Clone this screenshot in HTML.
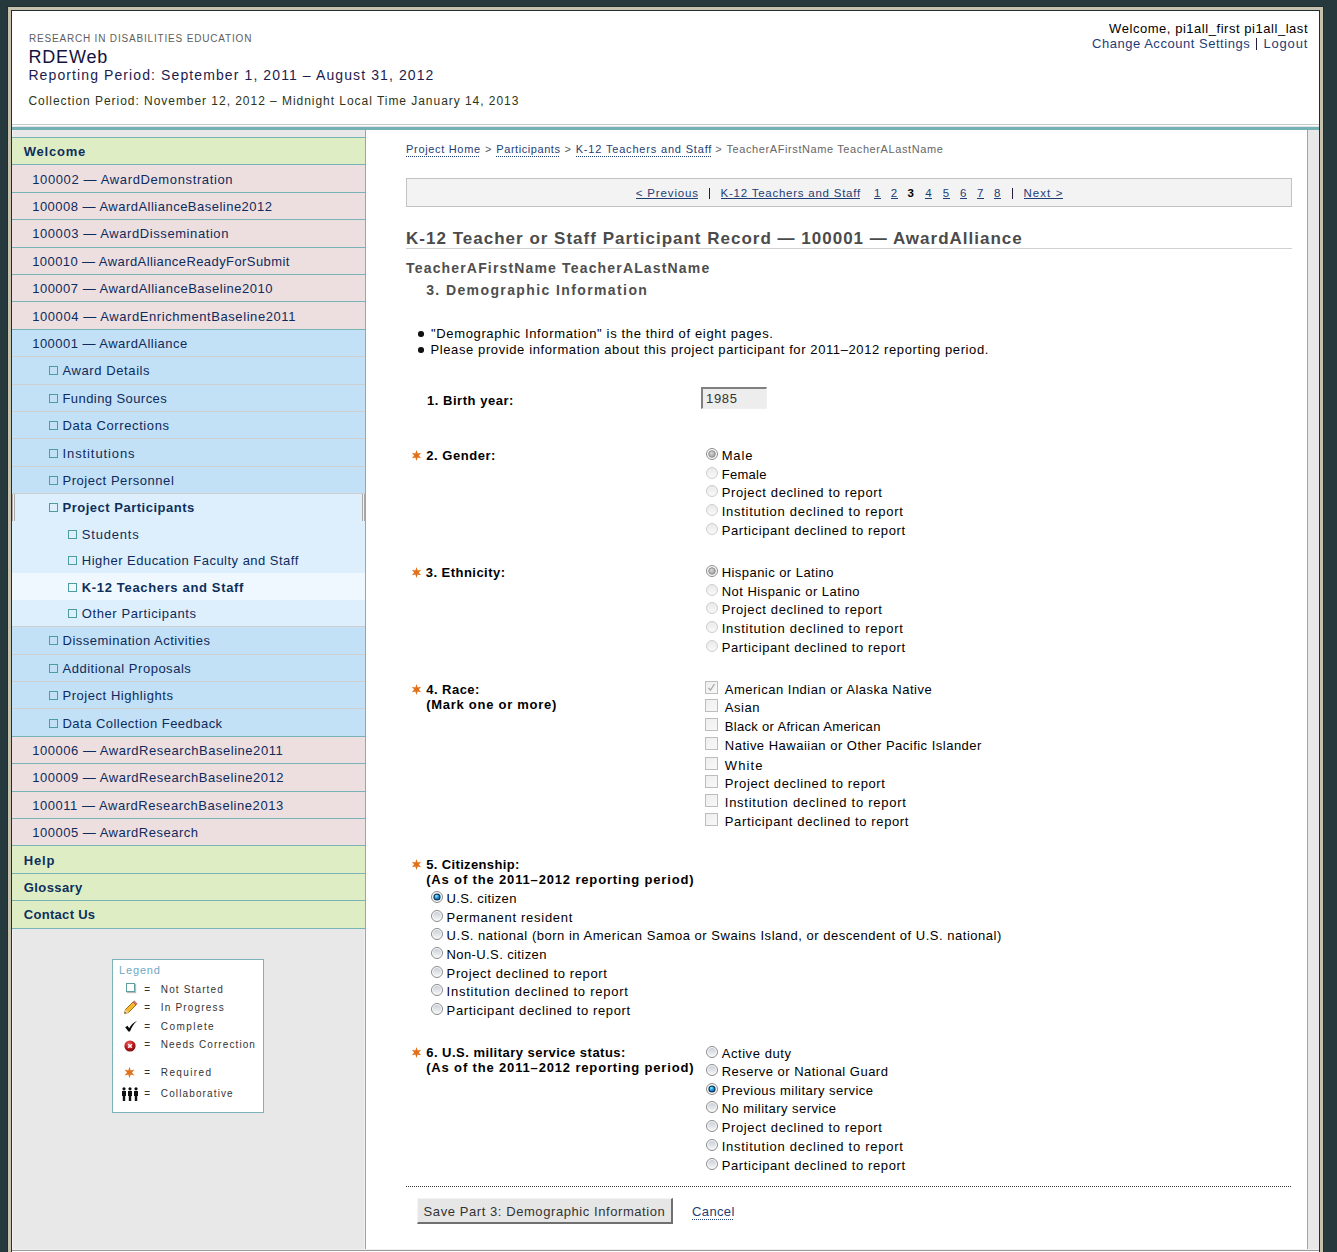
<!DOCTYPE html>
<html><head><meta charset="utf-8"><title>RDEWeb</title>
<style>
html,body{margin:0;padding:0}
body{width:1337px;height:1252px;overflow:hidden;position:relative;background:#263a3e;font-family:"Liberation Sans", sans-serif}
.t{line-height:20px;white-space:pre}
</style></head><body>
<svg width="0" height="0" style="position:absolute"><defs><linearGradient id="gdis" x1="0" y1="0" x2="0" y2="1"><stop offset="0" stop-color="#e9e9e9"/><stop offset="1" stop-color="#f9f9f9"/></linearGradient><radialGradient id="gdchk" cx="0.4" cy="0.35" r="0.7"><stop offset="0" stop-color="#d8d8d8"/><stop offset="1" stop-color="#9c9c9c"/></radialGradient><linearGradient id="gen" x1="0" y1="0" x2="0" y2="1"><stop offset="0" stop-color="#c9d0d8"/><stop offset="1" stop-color="#f4f5f6"/></linearGradient><radialGradient id="gchk" cx="0.35" cy="0.3" r="0.8"><stop offset="0" stop-color="#9ef0ff"/><stop offset="0.5" stop-color="#22a0e0"/><stop offset="1" stop-color="#0d5fa0"/></radialGradient></defs></svg>
<div style="position:absolute;left:7px;top:6px;width:1317px;height:1300px;background:#1e3034"></div>
<div style="position:absolute;left:8px;top:7px;width:1315px;height:1300px;background:#c6c2ad"></div>
<div style="position:absolute;left:11px;top:10px;width:1309px;height:1300px;background:#1e3034"></div>
<div style="position:absolute;left:12px;top:11px;width:1307px;height:1300px;background:#fff"></div>
<div style="position:absolute;left:12px;top:124px;width:1307px;height:1px;background:#c8c8c8"></div>
<div style="position:absolute;left:12px;top:126px;width:1307px;height:1px;background:#e4e4e4"></div>
<div style="position:absolute;left:12px;top:127px;width:1307px;height:3px;background:#75b0b2"></div>
<div style="position:absolute;left:12px;top:130px;width:353px;height:1120px;background:#e8e8e8"></div>
<div style="position:absolute;left:12px;top:130px;width:1px;height:1120px;background:#f3f3f3"></div>
<div style="position:absolute;left:365px;top:130px;width:1px;height:1120px;background:#78b3b6"></div>
<div style="position:absolute;left:364px;top:930px;width:1px;height:320px;background:#efefef"></div>
<div style="position:absolute;left:1307px;top:130px;width:1px;height:1120px;background:#78b3b6"></div>
<div style="position:absolute;left:1308px;top:130px;width:11px;height:1120px;background:#e8e8e8"></div>
<div style="position:absolute;left:12px;top:1249px;width:1307px;height:1px;background:#f0f0f0"></div>
<div style="position:absolute;left:12px;top:1250px;width:1307px;height:1px;background:#9a9a9a"></div>
<div style="position:absolute;left:12px;top:1251px;width:1307px;height:2px;background:#fff"></div>
<div style="position:absolute;left:1256px;top:38px;width:1px;height:12px;background:#2a1a40"></div>
<div style="position:absolute;left:12px;top:137px;width:353px;height:1px;background:#78b3b6"></div>
<div style="position:absolute;left:12px;top:138px;width:353px;height:26px;background:#dfedc4"></div>
<div style="position:absolute;left:12px;top:164px;width:353px;height:1px;background:#78b3b6"></div>
<div style="position:absolute;left:12px;top:165px;width:353px;height:27px;background:#eddfe0"></div>
<div style="position:absolute;left:12px;top:192px;width:353px;height:1px;background:#78b3b6"></div>
<div style="position:absolute;left:12px;top:193px;width:353px;height:26px;background:#eddfe0"></div>
<div style="position:absolute;left:12px;top:219px;width:353px;height:1px;background:#78b3b6"></div>
<div style="position:absolute;left:12px;top:220px;width:353px;height:27px;background:#eddfe0"></div>
<div style="position:absolute;left:12px;top:247px;width:353px;height:1px;background:#78b3b6"></div>
<div style="position:absolute;left:12px;top:248px;width:353px;height:26px;background:#eddfe0"></div>
<div style="position:absolute;left:12px;top:274px;width:353px;height:1px;background:#78b3b6"></div>
<div style="position:absolute;left:12px;top:275px;width:353px;height:26px;background:#eddfe0"></div>
<div style="position:absolute;left:12px;top:301px;width:353px;height:1px;background:#78b3b6"></div>
<div style="position:absolute;left:12px;top:302px;width:353px;height:27px;background:#eddfe0"></div>
<div style="position:absolute;left:12px;top:329px;width:353px;height:1px;background:#78b3b6"></div>
<div style="position:absolute;left:12px;top:330px;width:353px;height:26px;background:#c2e0f6"></div>
<div style="position:absolute;left:12px;top:356px;width:353px;height:1px;background:#cfcfcf"></div>
<div style="position:absolute;left:12px;top:357px;width:353px;height:27px;background:#c2e0f6"></div>
<div style="position:absolute;left:49px;top:366px;width:9px;height:9px;border:1px solid #4d9ca0;box-sizing:border-box;background:transparent"></div>
<div style="position:absolute;left:12px;top:384px;width:353px;height:1px;background:#cfcfcf"></div>
<div style="position:absolute;left:12px;top:385px;width:353px;height:26px;background:#c2e0f6"></div>
<div style="position:absolute;left:49px;top:394px;width:9px;height:9px;border:1px solid #4d9ca0;box-sizing:border-box;background:transparent"></div>
<div style="position:absolute;left:12px;top:411px;width:353px;height:1px;background:#cfcfcf"></div>
<div style="position:absolute;left:12px;top:412px;width:353px;height:26px;background:#c2e0f6"></div>
<div style="position:absolute;left:49px;top:421px;width:9px;height:9px;border:1px solid #4d9ca0;box-sizing:border-box;background:transparent"></div>
<div style="position:absolute;left:12px;top:438px;width:353px;height:1px;background:#cfcfcf"></div>
<div style="position:absolute;left:12px;top:439px;width:353px;height:27px;background:#c2e0f6"></div>
<div style="position:absolute;left:49px;top:449px;width:9px;height:9px;border:1px solid #4d9ca0;box-sizing:border-box;background:transparent"></div>
<div style="position:absolute;left:12px;top:466px;width:353px;height:1px;background:#cfcfcf"></div>
<div style="position:absolute;left:12px;top:467px;width:353px;height:26px;background:#c2e0f6"></div>
<div style="position:absolute;left:49px;top:476px;width:9px;height:9px;border:1px solid #4d9ca0;box-sizing:border-box;background:transparent"></div>
<div style="position:absolute;left:12px;top:493px;width:353px;height:1px;background:#cfcfcf"></div>
<div style="position:absolute;left:12px;top:494px;width:353px;height:27px;background:#ddeffc"></div>
<div style="position:absolute;left:49px;top:503px;width:9px;height:9px;border:1px solid #4d9ca0;box-sizing:border-box;background:transparent"></div>
<div style="position:absolute;left:12px;top:521px;width:353px;height:26px;background:#ddeffc"></div>
<div style="position:absolute;left:68px;top:530px;width:9px;height:9px;border:1px solid #4d9ca0;box-sizing:border-box;background:transparent"></div>
<div style="position:absolute;left:12px;top:547px;width:353px;height:26px;background:#ddeffc"></div>
<div style="position:absolute;left:68px;top:556px;width:9px;height:9px;border:1px solid #4d9ca0;box-sizing:border-box;background:transparent"></div>
<div style="position:absolute;left:12px;top:573px;width:353px;height:27px;background:#eef8fe"></div>
<div style="position:absolute;left:68px;top:583px;width:9px;height:9px;border:1px solid #4d9ca0;box-sizing:border-box;background:transparent"></div>
<div style="position:absolute;left:12px;top:600px;width:353px;height:26px;background:#ddeffc"></div>
<div style="position:absolute;left:68px;top:609px;width:9px;height:9px;border:1px solid #4d9ca0;box-sizing:border-box;background:transparent"></div>
<div style="position:absolute;left:12px;top:626px;width:353px;height:1px;background:#cfcfcf"></div>
<div style="position:absolute;left:12px;top:627px;width:353px;height:27px;background:#c2e0f6"></div>
<div style="position:absolute;left:49px;top:636px;width:9px;height:9px;border:1px solid #4d9ca0;box-sizing:border-box;background:transparent"></div>
<div style="position:absolute;left:12px;top:654px;width:353px;height:1px;background:#cfcfcf"></div>
<div style="position:absolute;left:12px;top:655px;width:353px;height:26px;background:#c2e0f6"></div>
<div style="position:absolute;left:49px;top:664px;width:9px;height:9px;border:1px solid #4d9ca0;box-sizing:border-box;background:transparent"></div>
<div style="position:absolute;left:12px;top:681px;width:353px;height:1px;background:#cfcfcf"></div>
<div style="position:absolute;left:12px;top:682px;width:353px;height:26px;background:#c2e0f6"></div>
<div style="position:absolute;left:49px;top:691px;width:9px;height:9px;border:1px solid #4d9ca0;box-sizing:border-box;background:transparent"></div>
<div style="position:absolute;left:12px;top:708px;width:353px;height:1px;background:#cfcfcf"></div>
<div style="position:absolute;left:12px;top:709px;width:353px;height:27px;background:#c2e0f6"></div>
<div style="position:absolute;left:49px;top:719px;width:9px;height:9px;border:1px solid #4d9ca0;box-sizing:border-box;background:transparent"></div>
<div style="position:absolute;left:12px;top:736px;width:353px;height:1px;background:#78b3b6"></div>
<div style="position:absolute;left:12px;top:737px;width:353px;height:26px;background:#eddfe0"></div>
<div style="position:absolute;left:12px;top:763px;width:353px;height:1px;background:#78b3b6"></div>
<div style="position:absolute;left:12px;top:764px;width:353px;height:27px;background:#eddfe0"></div>
<div style="position:absolute;left:12px;top:791px;width:353px;height:1px;background:#78b3b6"></div>
<div style="position:absolute;left:12px;top:792px;width:353px;height:26px;background:#eddfe0"></div>
<div style="position:absolute;left:12px;top:818px;width:353px;height:1px;background:#78b3b6"></div>
<div style="position:absolute;left:12px;top:819px;width:353px;height:26px;background:#eddfe0"></div>
<div style="position:absolute;left:12px;top:845px;width:353px;height:1px;background:#78b3b6"></div>
<div style="position:absolute;left:12px;top:846px;width:353px;height:27px;background:#dfedc4"></div>
<div style="position:absolute;left:12px;top:873px;width:353px;height:1px;background:#78b3b6"></div>
<div style="position:absolute;left:12px;top:874px;width:353px;height:26px;background:#dfedc4"></div>
<div style="position:absolute;left:12px;top:900px;width:353px;height:1px;background:#78b3b6"></div>
<div style="position:absolute;left:12px;top:901px;width:353px;height:27px;background:#dfedc4"></div>
<div style="position:absolute;left:12px;top:494px;width:1px;height:27px;background:#a9a9a9"></div>
<div style="position:absolute;left:14px;top:494px;width:1px;height:27px;background:#a9a9a9"></div>
<div style="position:absolute;left:362px;top:494px;width:1px;height:27px;background:#a9a9a9"></div>
<div style="position:absolute;left:364px;top:494px;width:1px;height:27px;background:#a9a9a9"></div>
<div style="position:absolute;left:13px;top:494px;width:1px;height:27px;background:#e9f5fc"></div>
<div style="position:absolute;left:363px;top:494px;width:1px;height:27px;background:#e9f5fc"></div>
<div style="position:absolute;left:12px;top:928px;width:353px;height:1px;background:#78b3b6"></div>
<div style="position:absolute;left:112px;top:959px;width:152px;height:154px;border:1px solid #7db4b7;box-sizing:border-box;background:#fff"></div>
<div style="position:absolute;left:126px;top:983px;width:9px;height:9px;border:1px solid #5f9fa2;box-sizing:border-box;background:#fff;box-shadow:1px 1px 1px #bbb"></div>
<svg style="position:absolute;left:123px;top:1000px" width="15" height="15" viewBox="0 0 15 15"><path d="M1.5 13.5 L2.5 9.5 L10 2 L13 5 L5.5 12.5 Z" fill="#f5b82c" stroke="#9a6410" stroke-width="0.9"/><path d="M10 2 L13 5 L14.2 3.8 L11.2 0.8 Z" fill="#e07878" stroke="#9a5050" stroke-width="0.6"/><path d="M1.5 13.5 L2.5 9.5 L5.5 12.5 Z" fill="#f0d2a8"/><path d="M1.5 13.5 L2 11.8 L3.2 13 Z" fill="#555"/></svg>
<svg style="position:absolute;left:124px;top:1020px" width="13" height="13" viewBox="0 0 13 13"><path d="M1.2 7.2 L3.6 5.8 L5.2 8.2 C7 5 9.2 2.6 12.4 1.2 L12.6 1.6 C9.8 3.8 7.6 7.2 6 11.6 L4.4 11.6 Z" fill="#0a0a0a"/></svg>
<svg style="position:absolute;left:124px;top:1040px" width="12" height="12" viewBox="0 0 12 12"><defs><radialGradient id="rg" cx="0.4" cy="0.3" r="0.8"><stop offset="0" stop-color="#f06060"/><stop offset="0.55" stop-color="#b8141a"/><stop offset="1" stop-color="#5e0808"/></radialGradient></defs><circle cx="6" cy="6" r="5.6" fill="url(#rg)"/><path d="M4.2 4.2 L7.8 7.8 M7.8 4.2 L4.2 7.8" stroke="#fff" stroke-width="1.5"/></svg>
<svg style="position:absolute;left:123px;top:1066px" width="13" height="13" viewBox="0 0 13 13"><polygon points="6.50,0.70 5.30,4.42 1.48,3.60 4.10,6.50 1.48,9.40 5.30,8.58 6.50,12.30 7.70,8.58 11.52,9.40 8.90,6.50 11.52,3.60 7.70,4.42" fill="#e0711a"/></svg>
<svg style="position:absolute;left:121px;top:1087px" width="18" height="14" viewBox="0 0 18 14"><circle cx="3" cy="1.8" r="1.6" fill="#111"/><path d="M1 4 h4 v5 h-0.8 v5 h-2.4 v-5 h-0.8 z" fill="#111"/><circle cx="9" cy="1.8" r="1.6" fill="#111"/><path d="M7 4 h4 v5 h-0.8 v5 h-2.4 v-5 h-0.8 z" fill="#111"/><circle cx="15" cy="1.8" r="1.6" fill="#111"/><path d="M13 4 h4 v5 h-0.8 v5 h-2.4 v-5 h-0.8 z" fill="#111"/></svg>
<div style="position:absolute;left:406px;top:156px;width:74px;height:1px;background-image:linear-gradient(to right,#1f3d75 50%,transparent 50%);background-size:2px 1px"></div>
<div style="position:absolute;left:496px;top:156px;width:64px;height:1px;background-image:linear-gradient(to right,#1f3d75 50%,transparent 50%);background-size:2px 1px"></div>
<div style="position:absolute;left:576px;top:156px;width:136px;height:1px;background-image:linear-gradient(to right,#1f3d75 50%,transparent 50%);background-size:2px 1px"></div>
<div style="position:absolute;left:406px;top:178px;width:886px;height:29px;border:1px solid #c2c2c2;box-sizing:border-box;background:#f3f3f3"></div>
<div style="position:absolute;left:636px;top:198px;width:62px;height:1px;background:#1f3d75"></div>
<div style="position:absolute;left:709px;top:188px;width:1px;height:11px;background:#2a1a40"></div>
<div style="position:absolute;left:721px;top:198px;width:139px;height:1px;background:#1f3d75"></div>
<div style="position:absolute;left:874px;top:198px;width:7px;height:1px;background:#1f3d75"></div>
<div style="position:absolute;left:891px;top:198px;width:7px;height:1px;background:#1f3d75"></div>
<div style="position:absolute;left:925px;top:198px;width:7px;height:1px;background:#1f3d75"></div>
<div style="position:absolute;left:943px;top:198px;width:7px;height:1px;background:#1f3d75"></div>
<div style="position:absolute;left:960px;top:198px;width:7px;height:1px;background:#1f3d75"></div>
<div style="position:absolute;left:977px;top:198px;width:7px;height:1px;background:#1f3d75"></div>
<div style="position:absolute;left:994px;top:198px;width:7px;height:1px;background:#1f3d75"></div>
<div style="position:absolute;left:1012px;top:188px;width:1px;height:11px;background:#2a1a40"></div>
<div style="position:absolute;left:1024px;top:198px;width:39px;height:1px;background:#1f3d75"></div>
<div style="position:absolute;left:406px;top:248px;width:886px;height:1px;background:#d0d0d0"></div>
<div style="position:absolute;left:418px;top:331px;width:5.5px;height:5.5px;border-radius:50%;background:#111"></div>
<div style="position:absolute;left:418px;top:347px;width:5.5px;height:5.5px;border-radius:50%;background:#111"></div>
<div style="position:absolute;left:701px;top:387px;width:66px;height:22px;box-sizing:border-box;border-top:2px solid #808080;border-left:2px solid #808080;border-right:1px solid #f0f0f0;border-bottom:1px solid #f0f0f0;background:#ededed"></div>
<svg style="position:absolute;left:411px;top:450px" width="11" height="11" viewBox="0 0 11 11"><polygon points="5.50,0.10 4.35,3.51 0.82,2.80 3.20,5.50 0.82,8.20 4.35,7.49 5.50,10.90 6.65,7.49 10.18,8.20 7.80,5.50 10.18,2.80 6.65,3.51" fill="#e0711a"/></svg>
<svg style="position:absolute;left:706px;top:448px" width="12" height="12" viewBox="0 0 12 12"><circle cx="6" cy="6" r="5.5" fill="#fbfbfb" stroke="#8c8c8c" stroke-width="1"/><circle cx="6" cy="6" r="3.3" fill="url(#gdchk)" stroke="#8e8e8e" stroke-width="1"/></svg>
<svg style="position:absolute;left:706px;top:467px" width="12" height="12" viewBox="0 0 12 12"><circle cx="6" cy="6" r="5.5" fill="url(#gdis)" stroke="#cdcdcd" stroke-width="1"/></svg>
<svg style="position:absolute;left:706px;top:485px" width="12" height="12" viewBox="0 0 12 12"><circle cx="6" cy="6" r="5.5" fill="url(#gdis)" stroke="#cdcdcd" stroke-width="1"/></svg>
<svg style="position:absolute;left:706px;top:504px" width="12" height="12" viewBox="0 0 12 12"><circle cx="6" cy="6" r="5.5" fill="url(#gdis)" stroke="#cdcdcd" stroke-width="1"/></svg>
<svg style="position:absolute;left:706px;top:523px" width="12" height="12" viewBox="0 0 12 12"><circle cx="6" cy="6" r="5.5" fill="url(#gdis)" stroke="#cdcdcd" stroke-width="1"/></svg>
<svg style="position:absolute;left:411px;top:567px" width="11" height="11" viewBox="0 0 11 11"><polygon points="5.50,0.10 4.35,3.51 0.82,2.80 3.20,5.50 0.82,8.20 4.35,7.49 5.50,10.90 6.65,7.49 10.18,8.20 7.80,5.50 10.18,2.80 6.65,3.51" fill="#e0711a"/></svg>
<svg style="position:absolute;left:706px;top:565px" width="12" height="12" viewBox="0 0 12 12"><circle cx="6" cy="6" r="5.5" fill="#fbfbfb" stroke="#8c8c8c" stroke-width="1"/><circle cx="6" cy="6" r="3.3" fill="url(#gdchk)" stroke="#8e8e8e" stroke-width="1"/></svg>
<svg style="position:absolute;left:706px;top:584px" width="12" height="12" viewBox="0 0 12 12"><circle cx="6" cy="6" r="5.5" fill="url(#gdis)" stroke="#cdcdcd" stroke-width="1"/></svg>
<svg style="position:absolute;left:706px;top:602px" width="12" height="12" viewBox="0 0 12 12"><circle cx="6" cy="6" r="5.5" fill="url(#gdis)" stroke="#cdcdcd" stroke-width="1"/></svg>
<svg style="position:absolute;left:706px;top:621px" width="12" height="12" viewBox="0 0 12 12"><circle cx="6" cy="6" r="5.5" fill="url(#gdis)" stroke="#cdcdcd" stroke-width="1"/></svg>
<svg style="position:absolute;left:706px;top:640px" width="12" height="12" viewBox="0 0 12 12"><circle cx="6" cy="6" r="5.5" fill="url(#gdis)" stroke="#cdcdcd" stroke-width="1"/></svg>
<svg style="position:absolute;left:411px;top:684px" width="11" height="11" viewBox="0 0 11 11"><polygon points="5.50,0.10 4.35,3.51 0.82,2.80 3.20,5.50 0.82,8.20 4.35,7.49 5.50,10.90 6.65,7.49 10.18,8.20 7.80,5.50 10.18,2.80 6.65,3.51" fill="#e0711a"/></svg>
<div style="position:absolute;left:705px;top:681px;width:13px;height:13px;box-sizing:border-box;border:1px solid #bdbdbd;background:linear-gradient(135deg,#eeeeee,#f8f8f8)"></div>
<svg style="position:absolute;left:705px;top:681px" width="13" height="13" viewBox="0 0 13 13"><path d="M3.5 6.8 L5.5 9.2 L9.5 3" stroke="#a9a9a9" stroke-width="1.3" fill="none"/></svg>
<div style="position:absolute;left:705px;top:699px;width:13px;height:13px;box-sizing:border-box;border:1px solid #bdbdbd;background:linear-gradient(135deg,#eeeeee,#f8f8f8)"></div>
<div style="position:absolute;left:705px;top:718px;width:13px;height:13px;box-sizing:border-box;border:1px solid #bdbdbd;background:linear-gradient(135deg,#eeeeee,#f8f8f8)"></div>
<div style="position:absolute;left:705px;top:737px;width:13px;height:13px;box-sizing:border-box;border:1px solid #bdbdbd;background:linear-gradient(135deg,#eeeeee,#f8f8f8)"></div>
<div style="position:absolute;left:705px;top:757px;width:13px;height:13px;box-sizing:border-box;border:1px solid #bdbdbd;background:linear-gradient(135deg,#eeeeee,#f8f8f8)"></div>
<div style="position:absolute;left:705px;top:775px;width:13px;height:13px;box-sizing:border-box;border:1px solid #bdbdbd;background:linear-gradient(135deg,#eeeeee,#f8f8f8)"></div>
<div style="position:absolute;left:705px;top:794px;width:13px;height:13px;box-sizing:border-box;border:1px solid #bdbdbd;background:linear-gradient(135deg,#eeeeee,#f8f8f8)"></div>
<div style="position:absolute;left:705px;top:813px;width:13px;height:13px;box-sizing:border-box;border:1px solid #bdbdbd;background:linear-gradient(135deg,#eeeeee,#f8f8f8)"></div>
<svg style="position:absolute;left:411px;top:859px" width="11" height="11" viewBox="0 0 11 11"><polygon points="5.50,0.10 4.35,3.51 0.82,2.80 3.20,5.50 0.82,8.20 4.35,7.49 5.50,10.90 6.65,7.49 10.18,8.20 7.80,5.50 10.18,2.80 6.65,3.51" fill="#e0711a"/></svg>
<svg style="position:absolute;left:431px;top:891px" width="12" height="12" viewBox="0 0 12 12"><circle cx="6" cy="6" r="5.5" fill="#fafafa" stroke="#8a8a8a" stroke-width="1"/><circle cx="6" cy="6" r="3.6" fill="#0a2c52"/><circle cx="6" cy="6" r="2.5" fill="url(#gchk)"/></svg>
<svg style="position:absolute;left:431px;top:910px" width="12" height="12" viewBox="0 0 12 12"><circle cx="6" cy="6" r="5.5" fill="#fafafa" stroke="#8a8a8a" stroke-width="1"/><circle cx="6" cy="6" r="4" fill="url(#gen)"/></svg>
<svg style="position:absolute;left:431px;top:928px" width="12" height="12" viewBox="0 0 12 12"><circle cx="6" cy="6" r="5.5" fill="#fafafa" stroke="#8a8a8a" stroke-width="1"/><circle cx="6" cy="6" r="4" fill="url(#gen)"/></svg>
<svg style="position:absolute;left:431px;top:947px" width="12" height="12" viewBox="0 0 12 12"><circle cx="6" cy="6" r="5.5" fill="#fafafa" stroke="#8a8a8a" stroke-width="1"/><circle cx="6" cy="6" r="4" fill="url(#gen)"/></svg>
<svg style="position:absolute;left:431px;top:966px" width="12" height="12" viewBox="0 0 12 12"><circle cx="6" cy="6" r="5.5" fill="#fafafa" stroke="#8a8a8a" stroke-width="1"/><circle cx="6" cy="6" r="4" fill="url(#gen)"/></svg>
<svg style="position:absolute;left:431px;top:984px" width="12" height="12" viewBox="0 0 12 12"><circle cx="6" cy="6" r="5.5" fill="#fafafa" stroke="#8a8a8a" stroke-width="1"/><circle cx="6" cy="6" r="4" fill="url(#gen)"/></svg>
<svg style="position:absolute;left:431px;top:1003px" width="12" height="12" viewBox="0 0 12 12"><circle cx="6" cy="6" r="5.5" fill="#fafafa" stroke="#8a8a8a" stroke-width="1"/><circle cx="6" cy="6" r="4" fill="url(#gen)"/></svg>
<svg style="position:absolute;left:411px;top:1047px" width="11" height="11" viewBox="0 0 11 11"><polygon points="5.50,0.10 4.35,3.51 0.82,2.80 3.20,5.50 0.82,8.20 4.35,7.49 5.50,10.90 6.65,7.49 10.18,8.20 7.80,5.50 10.18,2.80 6.65,3.51" fill="#e0711a"/></svg>
<svg style="position:absolute;left:706px;top:1046px" width="12" height="12" viewBox="0 0 12 12"><circle cx="6" cy="6" r="5.5" fill="#fafafa" stroke="#8a8a8a" stroke-width="1"/><circle cx="6" cy="6" r="4" fill="url(#gen)"/></svg>
<svg style="position:absolute;left:706px;top:1064px" width="12" height="12" viewBox="0 0 12 12"><circle cx="6" cy="6" r="5.5" fill="#fafafa" stroke="#8a8a8a" stroke-width="1"/><circle cx="6" cy="6" r="4" fill="url(#gen)"/></svg>
<svg style="position:absolute;left:706px;top:1083px" width="12" height="12" viewBox="0 0 12 12"><circle cx="6" cy="6" r="5.5" fill="#fafafa" stroke="#8a8a8a" stroke-width="1"/><circle cx="6" cy="6" r="3.6" fill="#0a2c52"/><circle cx="6" cy="6" r="2.5" fill="url(#gchk)"/></svg>
<svg style="position:absolute;left:706px;top:1101px" width="12" height="12" viewBox="0 0 12 12"><circle cx="6" cy="6" r="5.5" fill="#fafafa" stroke="#8a8a8a" stroke-width="1"/><circle cx="6" cy="6" r="4" fill="url(#gen)"/></svg>
<svg style="position:absolute;left:706px;top:1120px" width="12" height="12" viewBox="0 0 12 12"><circle cx="6" cy="6" r="5.5" fill="#fafafa" stroke="#8a8a8a" stroke-width="1"/><circle cx="6" cy="6" r="4" fill="url(#gen)"/></svg>
<svg style="position:absolute;left:706px;top:1139px" width="12" height="12" viewBox="0 0 12 12"><circle cx="6" cy="6" r="5.5" fill="#fafafa" stroke="#8a8a8a" stroke-width="1"/><circle cx="6" cy="6" r="4" fill="url(#gen)"/></svg>
<svg style="position:absolute;left:706px;top:1158px" width="12" height="12" viewBox="0 0 12 12"><circle cx="6" cy="6" r="5.5" fill="#fafafa" stroke="#8a8a8a" stroke-width="1"/><circle cx="6" cy="6" r="4" fill="url(#gen)"/></svg>
<div style="position:absolute;left:406px;top:1186px;width:886px;height:1px;background-image:linear-gradient(to right,#333 50%,transparent 50%);background-size:2px 1px"></div>
<div style="position:absolute;left:417px;top:1198px;width:256px;height:26px;box-sizing:border-box;border-top:1px solid #f4f4f4;border-left:1px solid #f4f4f4;border-right:2px solid #707070;border-bottom:2px solid #707070;background:#e6e6e6"></div>
<div style="position:absolute;left:692px;top:1219px;width:42px;height:1px;background-image:linear-gradient(to right,#1f3d75 50%,transparent 50%);background-size:2px 1px"></div>
<div class="t" style="position:absolute;left:28.90px;top:29px;font-size:10px;font-weight:400;color:#5e5e5e;letter-spacing:0.821px;">RESEARCH IN DISABILITIES EDUCATION</div>
<div class="t" style="position:absolute;left:28.40px;top:47px;font-size:18px;font-weight:400;color:#14143f;letter-spacing:0.859px;">RDEWeb</div>
<div class="t" style="position:absolute;left:28.40px;top:65px;font-size:14px;font-weight:400;color:#1c1c4e;letter-spacing:1.103px;">Reporting Period: September 1, 2011 – August 31, 2012</div>
<div class="t" style="position:absolute;left:28.40px;top:91px;font-size:12px;font-weight:400;color:#2c3418;letter-spacing:0.961px;">Collection Period: November 12, 2012 – Midnight Local Time January 14, 2013</div>
<div class="t" style="position:absolute;right:28.96px;top:19px;font-size:13px;font-weight:400;color:#000;letter-spacing:0.540px;">Welcome, pi1all_first pi1all_last</div>
<div class="t" style="position:absolute;left:1092.00px;top:34px;font-size:13px;font-weight:400;color:#1f3d75;letter-spacing:0.532px;">Change Account Settings</div>
<div class="t" style="position:absolute;left:1263.40px;top:34px;font-size:13px;font-weight:400;color:#1f3d75;letter-spacing:0.847px;">Logout</div>
<div class="t" style="position:absolute;left:23.80px;top:142px;font-size:13px;font-weight:700;color:#0e2f5c;letter-spacing:0.759px;">Welcome</div>
<div class="t" style="position:absolute;left:32.20px;top:170px;font-size:13px;font-weight:400;color:#0d2b5c;letter-spacing:0.629px;">100002 — AwardDemonstration</div>
<div class="t" style="position:absolute;left:32.20px;top:197px;font-size:13px;font-weight:400;color:#0d2b5c;letter-spacing:0.484px;">100008 — AwardAllianceBaseline2012</div>
<div class="t" style="position:absolute;left:32.20px;top:224px;font-size:13px;font-weight:400;color:#0d2b5c;letter-spacing:0.579px;">100003 — AwardDissemination</div>
<div class="t" style="position:absolute;left:32.20px;top:252px;font-size:13px;font-weight:400;color:#0d2b5c;letter-spacing:0.418px;">100010 — AwardAllianceReadyForSubmit</div>
<div class="t" style="position:absolute;left:32.20px;top:279px;font-size:13px;font-weight:400;color:#0d2b5c;letter-spacing:0.497px;">100007 — AwardAllianceBaseline2010</div>
<div class="t" style="position:absolute;left:32.20px;top:307px;font-size:13px;font-weight:400;color:#0d2b5c;letter-spacing:0.575px;">100004 — AwardEnrichmentBaseline2011</div>
<div class="t" style="position:absolute;left:32.20px;top:334px;font-size:13px;font-weight:400;color:#0d2b5c;letter-spacing:0.475px;">100001 — AwardAlliance</div>
<div class="t" style="position:absolute;left:62.50px;top:361px;font-size:13px;font-weight:400;color:#0d2b5c;letter-spacing:0.594px;">Award Details</div>
<div class="t" style="position:absolute;left:62.50px;top:389px;font-size:13px;font-weight:400;color:#0d2b5c;letter-spacing:0.423px;">Funding Sources</div>
<div class="t" style="position:absolute;left:62.50px;top:416px;font-size:13px;font-weight:400;color:#0d2b5c;letter-spacing:0.597px;">Data Corrections</div>
<div class="t" style="position:absolute;left:62.50px;top:444px;font-size:13px;font-weight:400;color:#0d2b5c;letter-spacing:0.904px;">Institutions</div>
<div class="t" style="position:absolute;left:62.50px;top:471px;font-size:13px;font-weight:400;color:#0d2b5c;letter-spacing:0.542px;">Project Personnel</div>
<div class="t" style="position:absolute;left:62.50px;top:498px;font-size:13px;font-weight:700;color:#0e2f5c;letter-spacing:0.510px;">Project Participants</div>
<div class="t" style="position:absolute;left:81.80px;top:525px;font-size:13px;font-weight:400;color:#0d2b5c;letter-spacing:0.810px;">Students</div>
<div class="t" style="position:absolute;left:81.80px;top:551px;font-size:13px;font-weight:400;color:#0d2b5c;letter-spacing:0.480px;">Higher Education Faculty and Staff</div>
<div class="t" style="position:absolute;left:81.80px;top:578px;font-size:13px;font-weight:700;color:#0e2f5c;letter-spacing:0.657px;">K-12 Teachers and Staff</div>
<div class="t" style="position:absolute;left:81.80px;top:604px;font-size:13px;font-weight:400;color:#0d2b5c;letter-spacing:0.597px;">Other Participants</div>
<div class="t" style="position:absolute;left:62.50px;top:631px;font-size:13px;font-weight:400;color:#0d2b5c;letter-spacing:0.503px;">Dissemination Activities</div>
<div class="t" style="position:absolute;left:62.50px;top:659px;font-size:13px;font-weight:400;color:#0d2b5c;letter-spacing:0.514px;">Additional Proposals</div>
<div class="t" style="position:absolute;left:62.50px;top:686px;font-size:13px;font-weight:400;color:#0d2b5c;letter-spacing:0.544px;">Project Highlights</div>
<div class="t" style="position:absolute;left:62.50px;top:714px;font-size:13px;font-weight:400;color:#0d2b5c;letter-spacing:0.467px;">Data Collection Feedback</div>
<div class="t" style="position:absolute;left:32.20px;top:741px;font-size:13px;font-weight:400;color:#0d2b5c;letter-spacing:0.531px;">100006 — AwardResearchBaseline2011</div>
<div class="t" style="position:absolute;left:32.20px;top:768px;font-size:13px;font-weight:400;color:#0d2b5c;letter-spacing:0.523px;">100009 — AwardResearchBaseline2012</div>
<div class="t" style="position:absolute;left:32.20px;top:796px;font-size:13px;font-weight:400;color:#0d2b5c;letter-spacing:0.546px;">100011 — AwardResearchBaseline2013</div>
<div class="t" style="position:absolute;left:32.20px;top:823px;font-size:13px;font-weight:400;color:#0d2b5c;letter-spacing:0.508px;">100005 — AwardResearch</div>
<div class="t" style="position:absolute;left:23.80px;top:851px;font-size:13px;font-weight:700;color:#0e2f5c;letter-spacing:0.809px;">Help</div>
<div class="t" style="position:absolute;left:23.80px;top:878px;font-size:13px;font-weight:700;color:#0e2f5c;letter-spacing:0.406px;">Glossary</div>
<div class="t" style="position:absolute;left:23.80px;top:905px;font-size:13px;font-weight:700;color:#0e2f5c;letter-spacing:0.297px;">Contact Us</div>
<div class="t" style="position:absolute;left:119.10px;top:960px;font-size:11px;font-weight:400;color:#6fa8c4;letter-spacing:0.816px;">Legend</div>
<div class="t" style="position:absolute;left:144.20px;top:980px;font-size:10px;font-weight:400;color:#333;letter-spacing:0.000px;">=</div>
<div class="t" style="position:absolute;left:160.80px;top:980px;font-size:10px;font-weight:400;color:#333;letter-spacing:1.141px;">Not Started</div>
<div class="t" style="position:absolute;left:144.20px;top:998px;font-size:10px;font-weight:400;color:#333;letter-spacing:0.000px;">=</div>
<div class="t" style="position:absolute;left:160.80px;top:998px;font-size:10px;font-weight:400;color:#333;letter-spacing:1.176px;">In Progress</div>
<div class="t" style="position:absolute;left:144.20px;top:1017px;font-size:10px;font-weight:400;color:#333;letter-spacing:0.000px;">=</div>
<div class="t" style="position:absolute;left:160.80px;top:1017px;font-size:10px;font-weight:400;color:#333;letter-spacing:1.441px;">Complete</div>
<div class="t" style="position:absolute;left:144.20px;top:1035px;font-size:10px;font-weight:400;color:#333;letter-spacing:0.000px;">=</div>
<div class="t" style="position:absolute;left:160.80px;top:1035px;font-size:10px;font-weight:400;color:#333;letter-spacing:1.086px;">Needs Correction</div>
<div class="t" style="position:absolute;left:144.20px;top:1063px;font-size:10px;font-weight:400;color:#333;letter-spacing:0.000px;">=</div>
<div class="t" style="position:absolute;left:160.80px;top:1063px;font-size:10px;font-weight:400;color:#333;letter-spacing:1.372px;">Required</div>
<div class="t" style="position:absolute;left:144.20px;top:1084px;font-size:10px;font-weight:400;color:#333;letter-spacing:0.000px;">=</div>
<div class="t" style="position:absolute;left:160.80px;top:1084px;font-size:10px;font-weight:400;color:#333;letter-spacing:1.127px;">Collaborative</div>
<div class="t" style="position:absolute;left:406.10px;top:139px;font-size:11px;font-weight:400;color:#1f3d75;letter-spacing:0.669px;">Project Home</div>
<div class="t" style="position:absolute;left:485.00px;top:139px;font-size:11px;font-weight:400;color:#555;letter-spacing:0.000px;">&gt;</div>
<div class="t" style="position:absolute;left:496.30px;top:139px;font-size:11px;font-weight:400;color:#1f3d75;letter-spacing:0.565px;">Participants</div>
<div class="t" style="position:absolute;left:564.40px;top:139px;font-size:11px;font-weight:400;color:#555;letter-spacing:0.000px;">&gt;</div>
<div class="t" style="position:absolute;left:575.70px;top:139px;font-size:11px;font-weight:400;color:#1f3d75;letter-spacing:0.822px;">K-12 Teachers and Staff</div>
<div class="t" style="position:absolute;left:715.20px;top:139px;font-size:11px;font-weight:400;color:#666;letter-spacing:0.000px;">&gt;</div>
<div class="t" style="position:absolute;left:726.40px;top:139px;font-size:11px;font-weight:400;color:#666;letter-spacing:0.601px;">TeacherAFirstName TeacherALastName</div>
<div class="t" style="position:absolute;left:635.70px;top:183px;font-size:11.5px;font-weight:400;color:#1f3d75;letter-spacing:0.860px;">&lt; Previous</div>
<div class="t" style="position:absolute;left:720.60px;top:183px;font-size:11.5px;font-weight:400;color:#1f3d75;letter-spacing:0.756px;">K-12 Teachers and Staff</div>
<div class="t" style="position:absolute;left:874.00px;top:183px;font-size:11.5px;font-weight:400;color:#1f3d75;letter-spacing:0.000px;">1</div>
<div class="t" style="position:absolute;left:890.70px;top:183px;font-size:11.5px;font-weight:400;color:#1f3d75;letter-spacing:0.000px;">2</div>
<div class="t" style="position:absolute;left:907.40px;top:183px;font-size:11.5px;font-weight:700;color:#000;letter-spacing:0.000px;">3</div>
<div class="t" style="position:absolute;left:925.20px;top:183px;font-size:11.5px;font-weight:400;color:#1f3d75;letter-spacing:0.000px;">4</div>
<div class="t" style="position:absolute;left:942.70px;top:183px;font-size:11.5px;font-weight:400;color:#1f3d75;letter-spacing:0.000px;">5</div>
<div class="t" style="position:absolute;left:959.90px;top:183px;font-size:11.5px;font-weight:400;color:#1f3d75;letter-spacing:0.000px;">6</div>
<div class="t" style="position:absolute;left:976.90px;top:183px;font-size:11.5px;font-weight:400;color:#1f3d75;letter-spacing:0.000px;">7</div>
<div class="t" style="position:absolute;left:993.90px;top:183px;font-size:11.5px;font-weight:400;color:#1f3d75;letter-spacing:0.000px;">8</div>
<div class="t" style="position:absolute;left:1023.40px;top:183px;font-size:11.5px;font-weight:400;color:#1f3d75;letter-spacing:1.087px;">Next &gt;</div>
<div class="t" style="position:absolute;left:406.10px;top:229px;font-size:17px;font-weight:700;color:#4b4b4b;letter-spacing:1.004px;">K-12 Teacher or Staff Participant Record — 100001 — AwardAlliance</div>
<div class="t" style="position:absolute;left:406.10px;top:258px;font-size:14px;font-weight:700;color:#4e4e4e;letter-spacing:1.160px;">TeacherAFirstName TeacherALastName</div>
<div class="t" style="position:absolute;left:426.20px;top:280px;font-size:14px;font-weight:700;color:#4e4e4e;letter-spacing:1.391px;">3. Demographic Information</div>
<div class="t" style="position:absolute;left:431.00px;top:324px;font-size:13px;font-weight:400;color:#000;letter-spacing:0.646px;">&quot;Demographic Information&quot; is the third of eight pages.</div>
<div class="t" style="position:absolute;left:430.50px;top:340px;font-size:13px;font-weight:400;color:#000;letter-spacing:0.602px;">Please provide information about this project participant for 2011–2012 reporting period.</div>
<div class="t" style="position:absolute;left:426.90px;top:391px;font-size:13px;font-weight:700;color:#000;letter-spacing:0.540px;">1. Birth year:</div>
<div class="t" style="position:absolute;left:706.10px;top:389px;font-size:13px;font-weight:400;color:#333;letter-spacing:0.626px;">1985</div>
<div class="t" style="position:absolute;left:426.30px;top:446px;font-size:13px;font-weight:700;color:#000;letter-spacing:0.534px;">2. Gender:</div>
<div class="t" style="position:absolute;left:721.70px;top:446px;font-size:13px;font-weight:400;color:#000;letter-spacing:0.838px;">Male</div>
<div class="t" style="position:absolute;left:721.70px;top:465px;font-size:13px;font-weight:400;color:#000;letter-spacing:0.268px;">Female</div>
<div class="t" style="position:absolute;left:721.70px;top:483px;font-size:13px;font-weight:400;color:#000;letter-spacing:0.627px;">Project declined to report</div>
<div class="t" style="position:absolute;left:721.70px;top:502px;font-size:13px;font-weight:400;color:#000;letter-spacing:0.741px;">Institution declined to report</div>
<div class="t" style="position:absolute;left:721.70px;top:521px;font-size:13px;font-weight:400;color:#000;letter-spacing:0.618px;">Participant declined to report</div>
<div class="t" style="position:absolute;left:425.70px;top:563px;font-size:13px;font-weight:700;color:#000;letter-spacing:0.468px;">3. Ethnicity:</div>
<div class="t" style="position:absolute;left:721.70px;top:563px;font-size:13px;font-weight:400;color:#000;letter-spacing:0.449px;">Hispanic or Latino</div>
<div class="t" style="position:absolute;left:721.70px;top:582px;font-size:13px;font-weight:400;color:#000;letter-spacing:0.476px;">Not Hispanic or Latino</div>
<div class="t" style="position:absolute;left:721.70px;top:600px;font-size:13px;font-weight:400;color:#000;letter-spacing:0.627px;">Project declined to report</div>
<div class="t" style="position:absolute;left:721.70px;top:619px;font-size:13px;font-weight:400;color:#000;letter-spacing:0.741px;">Institution declined to report</div>
<div class="t" style="position:absolute;left:721.70px;top:638px;font-size:13px;font-weight:400;color:#000;letter-spacing:0.618px;">Participant declined to report</div>
<div class="t" style="position:absolute;left:426.20px;top:680px;font-size:13px;font-weight:700;color:#000;letter-spacing:0.475px;">4. Race:</div>
<div class="t" style="position:absolute;left:426.20px;top:695px;font-size:13px;font-weight:700;color:#000;letter-spacing:0.732px;">(Mark one or more)</div>
<div class="t" style="position:absolute;left:724.80px;top:680px;font-size:13px;font-weight:400;color:#000;letter-spacing:0.497px;">American Indian or Alaska Native</div>
<div class="t" style="position:absolute;left:724.80px;top:698px;font-size:13px;font-weight:400;color:#000;letter-spacing:0.517px;">Asian</div>
<div class="t" style="position:absolute;left:724.80px;top:717px;font-size:13px;font-weight:400;color:#000;letter-spacing:0.311px;">Black or African American</div>
<div class="t" style="position:absolute;left:724.80px;top:736px;font-size:13px;font-weight:400;color:#000;letter-spacing:0.490px;">Native Hawaiian or Other Pacific Islander</div>
<div class="t" style="position:absolute;left:724.80px;top:756px;font-size:13px;font-weight:400;color:#000;letter-spacing:1.091px;">White</div>
<div class="t" style="position:absolute;left:724.80px;top:774px;font-size:13px;font-weight:400;color:#000;letter-spacing:0.623px;">Project declined to report</div>
<div class="t" style="position:absolute;left:724.80px;top:793px;font-size:13px;font-weight:400;color:#000;letter-spacing:0.737px;">Institution declined to report</div>
<div class="t" style="position:absolute;left:724.80px;top:812px;font-size:13px;font-weight:400;color:#000;letter-spacing:0.625px;">Participant declined to report</div>
<div class="t" style="position:absolute;left:426.20px;top:855px;font-size:13px;font-weight:700;color:#000;letter-spacing:0.362px;">5. Citizenship:</div>
<div class="t" style="position:absolute;left:426.20px;top:870px;font-size:13px;font-weight:700;color:#000;letter-spacing:0.842px;">(As of the 2011–2012 reporting period)</div>
<div class="t" style="position:absolute;left:446.60px;top:889px;font-size:13px;font-weight:400;color:#000;letter-spacing:0.368px;">U.S. citizen</div>
<div class="t" style="position:absolute;left:446.60px;top:908px;font-size:13px;font-weight:400;color:#000;letter-spacing:0.726px;">Permanent resident</div>
<div class="t" style="position:absolute;left:446.60px;top:926px;font-size:13px;font-weight:400;color:#000;letter-spacing:0.518px;">U.S. national (born in American Samoa or Swains Island, or descendent of U.S. national)</div>
<div class="t" style="position:absolute;left:446.60px;top:945px;font-size:13px;font-weight:400;color:#000;letter-spacing:0.392px;">Non-U.S. citizen</div>
<div class="t" style="position:absolute;left:446.60px;top:964px;font-size:13px;font-weight:400;color:#000;letter-spacing:0.631px;">Project declined to report</div>
<div class="t" style="position:absolute;left:446.60px;top:982px;font-size:13px;font-weight:400;color:#000;letter-spacing:0.744px;">Institution declined to report</div>
<div class="t" style="position:absolute;left:446.60px;top:1001px;font-size:13px;font-weight:400;color:#000;letter-spacing:0.621px;">Participant declined to report</div>
<div class="t" style="position:absolute;left:426.20px;top:1043px;font-size:13px;font-weight:700;color:#000;letter-spacing:0.482px;">6. U.S. military service status:</div>
<div class="t" style="position:absolute;left:426.20px;top:1058px;font-size:13px;font-weight:700;color:#000;letter-spacing:0.842px;">(As of the 2011–2012 reporting period)</div>
<div class="t" style="position:absolute;left:721.70px;top:1044px;font-size:13px;font-weight:400;color:#000;letter-spacing:0.561px;">Active duty</div>
<div class="t" style="position:absolute;left:721.70px;top:1062px;font-size:13px;font-weight:400;color:#000;letter-spacing:0.482px;">Reserve or National Guard</div>
<div class="t" style="position:absolute;left:721.70px;top:1081px;font-size:13px;font-weight:400;color:#000;letter-spacing:0.464px;">Previous military service</div>
<div class="t" style="position:absolute;left:721.70px;top:1099px;font-size:13px;font-weight:400;color:#000;letter-spacing:0.445px;">No military service</div>
<div class="t" style="position:absolute;left:721.70px;top:1118px;font-size:13px;font-weight:400;color:#000;letter-spacing:0.627px;">Project declined to report</div>
<div class="t" style="position:absolute;left:721.70px;top:1137px;font-size:13px;font-weight:400;color:#000;letter-spacing:0.741px;">Institution declined to report</div>
<div class="t" style="position:absolute;left:721.70px;top:1156px;font-size:13px;font-weight:400;color:#000;letter-spacing:0.618px;">Participant declined to report</div>
<div class="t" style="position:absolute;left:423.60px;top:1202px;font-size:13px;font-weight:400;color:#333;letter-spacing:0.574px;">Save Part 3: Demographic Information</div>
<div class="t" style="position:absolute;left:692.10px;top:1202px;font-size:13px;font-weight:400;color:#1f3d75;letter-spacing:0.346px;">Cancel</div>
</body></html>
